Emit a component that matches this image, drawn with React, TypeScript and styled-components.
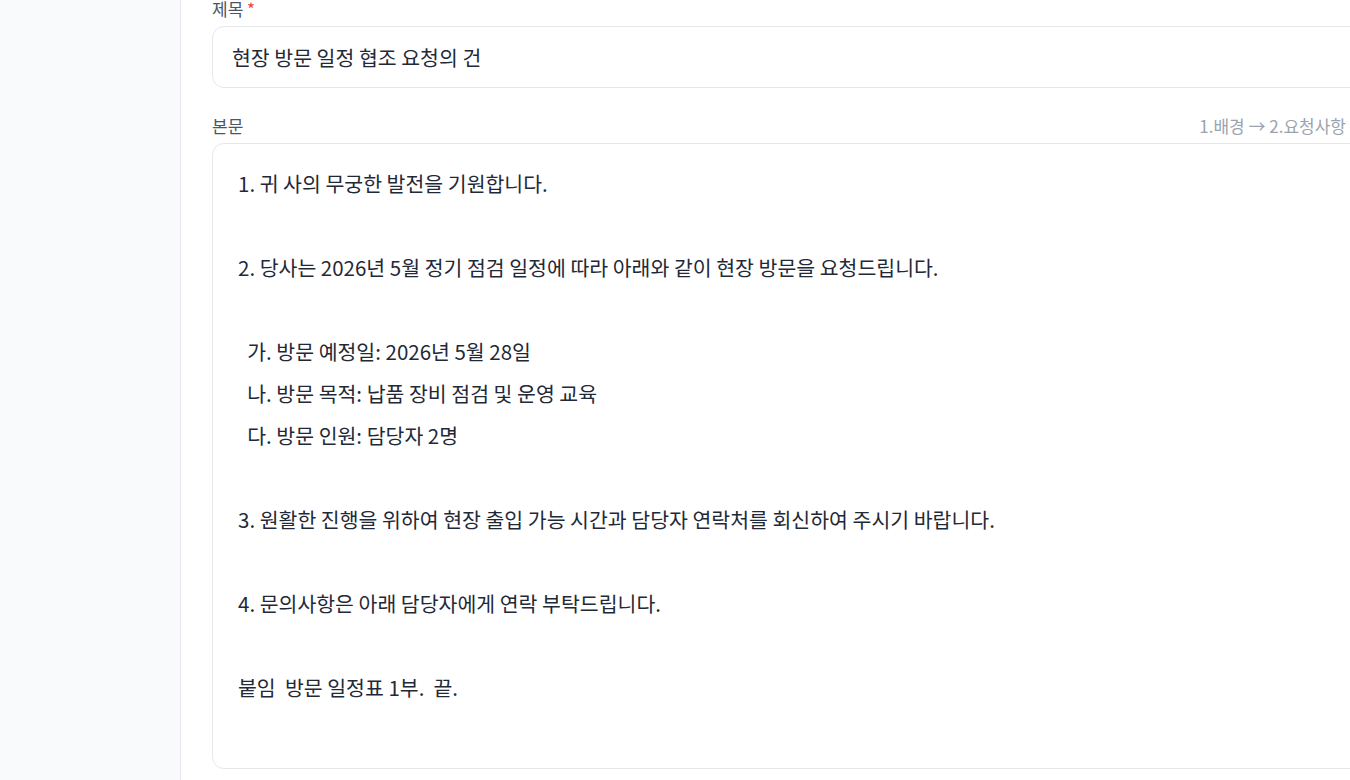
import React, { FC } from "react";
import styled, { createGlobalStyle } from "styled-components";

const GlobalStyle = createGlobalStyle`
  html, body {
    margin: 0;
    padding: 0;
    background: #ffffff;
    overflow: hidden;
    font-family: "Noto Sans CJK KR", "Noto Sans", sans-serif;
  }
`;

const BODY_TEXT = `1. 귀 사의 무궁한 발전을 기원합니다.

2. 당사는 2026년 5월 정기 점검 일정에 따라 아래와 같이 현장 방문을 요청드립니다.

  가. 방문 예정일: 2026년 5월 28일
  나. 방문 목적: 납품 장비 점검 및 운영 교육
  다. 방문 인원: 담당자 2명

3. 원활한 진행을 위하여 현장 출입 가능 시간과 담당자 연락처를 회신하여 주시기 바랍니다.

4. 문의사항은 아래 담당자에게 연락 부탁드립니다.

붙임  방문 일정표 1부.  끝.`;

const App: FC = () => {
  return (
    <Layout>
      <GlobalStyle />
      <Sidebar />
      <Main>
        <Form>
          <Field>
            <LabelRow>
              <Label>
                제목 <Required>*</Required>
              </Label>
            </LabelRow>
            <TitleInput defaultValue="현장 방문 일정 협조 요청의 건" />
          </Field>
          <Field>
            <LabelRow>
              <Label>본문</Label>
              <Hint>1.배경 → 2.요청사항</Hint>
            </LabelRow>
            <BodyArea defaultValue={BODY_TEXT} />
          </Field>
        </Form>
      </Main>
    </Layout>
  );
};

const Layout = styled.div`
  display: flex;
  width: 1350px;
  height: 780px;
  overflow: hidden;
`;

const Sidebar = styled.aside`
  flex: 0 0 180px;
  background: #f9fafb;
  border-right: 1px solid #e5e7eb;
`;

const Main = styled.main`
  flex: 1;
  min-width: 0;
  padding-left: 31px;
  margin-top: -3px;
`;

const Form = styled.div`
  width: 1180px;
  display: flex;
  flex-direction: column;
  gap: 26px;
`;

const Field = styled.div`
  display: flex;
  flex-direction: column;
`;

const LabelRow = styled.div`
  display: flex;
  align-items: center;
  justify-content: space-between;
  height: 22px;
  margin-bottom: 7px;
  padding-right: 46px;
`;

const Label = styled.label`
  font-size: 17px;
  color: #4b5563;
`;

const Required = styled.span`
  color: #ef4444;
`;

const Hint = styled.span`
  font-size: 17px;
  color: #9ca3af;
`;

const TitleInput = styled.input`
  box-sizing: border-box;
  height: 62px;
  padding: 0 19px;
  border: 1px solid #e5e7eb;
  border-radius: 12px;
  font-family: "Noto Sans CJK KR", "Noto Sans", sans-serif;
  font-size: 20.5px;
  color: #1f2937;
  background: #ffffff;
  outline: none;
`;

const BodyArea = styled.textarea`
  box-sizing: border-box;
  height: 626px;
  padding: 18px 25px;
  border: 1px solid #e5e7eb;
  border-radius: 12px;
  font-family: "Noto Sans CJK KR", "Noto Sans", sans-serif;
  font-size: 20.5px;
  line-height: 42px;
  color: #1f2937;
  background: #ffffff;
  resize: none;
  overflow: hidden;
  outline: none;
`;

export default App;
